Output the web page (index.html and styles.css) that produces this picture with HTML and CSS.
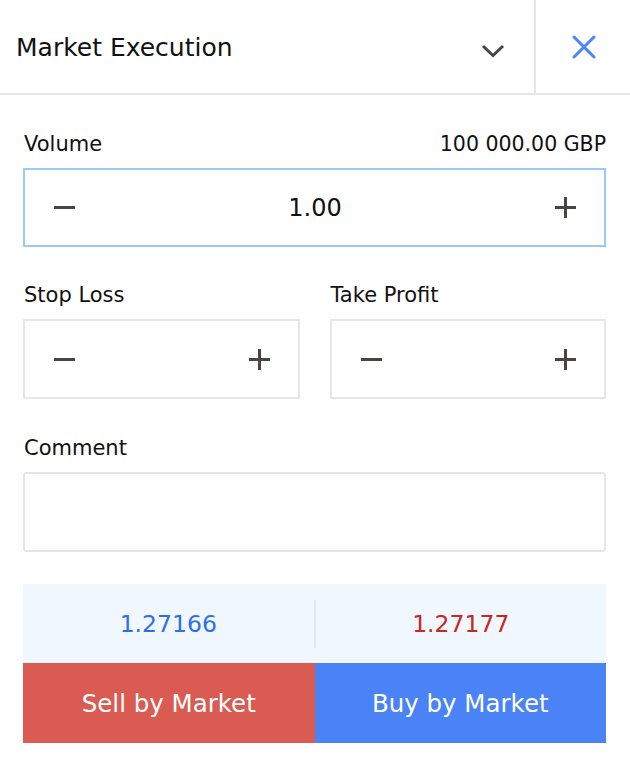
FILE: index.html
```html
<!DOCTYPE html>
<html lang="en">
<head>
    <meta charset="UTF-8">
    <meta name="viewport" content="width=device-width, initial-scale=1.0">
    <title>Market Execution</title>
    <link rel="stylesheet" href="styles.css">
</head>
<body>
    <section class="order">
        <header class="order-header">
            <div class="order-type">
                <span class="order-title">Market Execution</span>
                <svg class="chevron" width="24" height="16" viewBox="0 0 24 16">
                    <path d="M2 3 L12 12.5 L22 3" fill="none" stroke="#4a4542" stroke-width="3"/>
                </svg>
            </div>
            <button class="close" type="button">
                <svg width="24" height="24" viewBox="0 0 24 24">
                    <path d="M2 2 L22 22 M22 2 L2 22" fill="none" stroke="#4a86f5" stroke-width="3" stroke-linecap="round"/>
                </svg>
            </button>
        </header>

        <div class="order-body">
            <div class="field-head">
                <label>Volume</label>
                <span class="field-note">100 000.00 GBP</span>
            </div>
            <div class="stepper stepper-active">
                <svg class="step" width="21" height="21" viewBox="0 0 21 21"><path d="M0 10.5 H21"/></svg>
                <span class="stepper-value">1.00</span>
                <svg class="step" width="21" height="21" viewBox="0 0 21 21"><path d="M0 10.5 H21 M10.5 0 V21"/></svg>
            </div>

            <div class="levels">
                <div class="level">
                    <div class="field-head"><label>Stop Loss</label></div>
                    <div class="stepper">
                        <svg class="step" width="21" height="21" viewBox="0 0 21 21"><path d="M0 10.5 H21"/></svg>
                        <span class="stepper-value"></span>
                        <svg class="step" width="21" height="21" viewBox="0 0 21 21"><path d="M0 10.5 H21 M10.5 0 V21"/></svg>
                    </div>
                </div>
                <div class="level">
                    <div class="field-head"><label>Take Profit</label></div>
                    <div class="stepper">
                        <svg class="step" width="21" height="21" viewBox="0 0 21 21"><path d="M0 10.5 H21"/></svg>
                        <span class="stepper-value"></span>
                        <svg class="step" width="21" height="21" viewBox="0 0 21 21"><path d="M0 10.5 H21 M10.5 0 V21"/></svg>
                    </div>
                </div>
            </div>

            <div class="field-head comment-head"><label>Comment</label></div>
            <div class="comment"></div>

            <div class="quotes">
                <span class="bid">1.27166</span>
                <span class="ask">1.27177</span>
            </div>
            <div class="actions">
                <button class="sell" type="button">Sell by Market</button>
                <button class="buy" type="button">Buy by Market</button>
            </div>
        </div>
    </section>
</body>
</html>
```

FILE: styles.css
```css
html{
    box-sizing: border-box;
    font-family: "DejaVu Sans", sans-serif;
    font-size: 16px;
}
*,
*::before,
*::after{
    box-sizing: inherit;
}
body{
    margin: 0;
    background-color: #fff;
    color: #111;
}
.order{
    width: 630px;
}
.order-header{
    display: flex;
    height: 95px;
    border-bottom: 2px solid #e6e6e6;
}
.order-type{
    flex-grow: 1;
    display: flex;
    align-items: center;
    justify-content: space-between;
    padding: 2px 29px 0 16px;
    border-right: 2px solid #e6e6e6;
}
.order-title{
    font-size: 25px;
    color: #111;
}
.chevron{
    margin-top: 6px;
}
.close{
    width: 94px;
    border: 0;
    background: none;
    padding: 0 0 0 2px;
    display: flex;
    align-items: center;
    justify-content: center;
}
.order-body{
    padding: 31px 24px 0 23px;
}
.field-head{
    display: flex;
    justify-content: space-between;
    align-items: center;
    height: 42px;
    padding: 2px 0 8px 1px;
    font-size: 21px;
    color: #111;
}
.field-note{
    font-size: 20.5px;
}
.stepper{
    display: flex;
    align-items: center;
    justify-content: space-between;
    height: 79px;
    padding: 0 28px 0 29px;
    border: 2px solid #e6e6e6;
    font-size: 24px;
}
.stepper-active{
    border-color: #9ccaf8;
}
.level .stepper{
    height: 80px;
}
.step{
    flex-shrink: 0;
    fill: none;
    stroke: #4a4542;
    stroke-width: 3;
}
.stepper-value{
    flex-grow: 1;
    text-align: center;
}
.levels{
    display: flex;
    gap: 30px;
    margin-top: 30px;
}
.level{
    flex: 1;
}
.comment-head{
    margin-top: 31px;
}
.comment{
    height: 80px;
    border: 2px solid #e6e6e6;
    border-radius: 3px;
}
.quotes{
    display: flex;
    margin-top: 32px;
    height: 79px;
    align-items: center;
    background-color: #f0f7fe;
    font-size: 23.5px;
}
.quotes span{
    flex: 1;
    text-align: center;
}
.bid{
    color: #2f6fe6;
    border-right: 2px solid #e4e8ec;
    line-height: 48px;
}
.ask{
    color: #c8281e;
}
.actions{
    display: flex;
    height: 80px;
}
.actions button{
    flex: 1;
    border: 0;
    color: #fff;
    font-family: inherit;
    font-size: 24.5px;
}
.sell{
    background-color: #d95b52;
}
.buy{
    background-color: #4a83f5;
}
```
